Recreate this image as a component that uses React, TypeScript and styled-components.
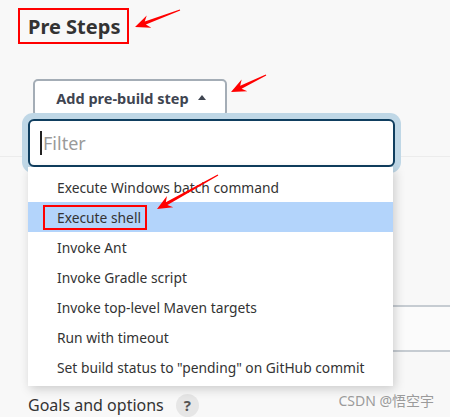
import styled, { createGlobalStyle } from 'styled-components'

const GlobalStyle = createGlobalStyle`
    html, body {
        margin: 0;
        padding: 0;
        background: #f8f8f8;
        font-family: "Noto Sans", "Open Sans", sans-serif;
        color: #333;
    }
`

const Page = styled('div')`
    position: relative;
    width: 450px;
    height: 417px;
    overflow: hidden;
    padding-top: 8px;
    box-sizing: border-box;
`

const Heading = styled('h2')`
    display: inline-block;
    margin: 0 0 0 18px;
    padding: 0 7px 0 8px;
    height: 36px;
    line-height: 33px;
    border: 2px solid #f00;
    box-sizing: border-box;
    font-size: 20px;
    font-weight: 700;
    color: #333;
`

const StepButton = styled('button')`
    display: flex;
    align-items: center;
    justify-content: center;
    gap: 9px;
    margin: 35px 0 0 33px;
    width: 194px;
    height: 38px;
    padding: 0 0 0 2px;
    background: #fff;
    border: 2px solid #a4adb6;
    border-radius: 5px;
    font-family: inherit;
    font-size: 14.5px;
    font-weight: 700;
    color: #3f4551;
`

const Caret = styled('span')`
    width: 0;
    height: 0;
    border-left: 4.5px solid transparent;
    border-right: 4.5px solid transparent;
    border-bottom: 5px solid #3f4551;
    margin-top: -2px;
`

const Divider = styled('div')`
    margin-top: 39px;
    height: 1px;
    background: #ececec;
`

const FieldInput = styled('div')`
    margin: 148px -10px 0 28px;
    height: 47px;
    background: #fbfbfb;
    border: 2px solid #c6ccd2;
    border-radius: 4px;
    box-sizing: border-box;
`

const FieldLabel = styled('div')`
    display: flex;
    align-items: center;
    gap: 12px;
    margin: 41px 0 0 28px;
    font-size: 16px;
    line-height: 24px;
    color: #333;
`

const HelpBadge = styled('span')`
    display: inline-flex;
    align-items: center;
    justify-content: center;
    width: 23px;
    height: 23px;
    border-radius: 50%;
    background: #e6e6e6;
    font-size: 15px;
    font-weight: 700;
    color: #555;
`

const Menu = styled('div')`
    position: absolute;
    left: 22px;
    top: 113px;
    width: 379px;
`

const FilterRing = styled('div')`
    padding: 6px;
    background: #bfd7e6;
    border-radius: 11px;
`

const FilterBox = styled('div')`
    display: flex;
    align-items: center;
    height: 48px;
    padding-left: 10px;
    background: #fff;
    border: 2px solid #0f3e5f;
    border-radius: 6px;
    box-sizing: border-box;
    font-size: 18px;
    color: #9a9a9a;
`

const TextCursor = styled('span')`
    width: 2px;
    height: 24px;
    background: #222;
    margin-right: 1px;
`

const MenuList = styled('ul')`
    list-style: none;
    margin: -6px 0 0 6px;
    padding: 5px 0 4px;
    width: 365px;
    background: #fff;
    box-shadow: 2px 3px 10px rgba(0, 0, 0, 0.18);
`

const MenuItem = styled('li')<{ $active?: boolean }>`
    display: flex;
    align-items: center;
    height: 30px;
    padding-left: 29px;
    font-size: 13.8px;
    color: #333;
    background: ${p => (p.$active ? '#b3d4fb' : 'transparent')};
`

const Marked = styled('span')`
    margin-left: -14px;
    padding: 1px 4px 1px 12px;
    border: 2px solid #f00;
`

const Watermark = styled('div')`
    position: absolute;
    right: 16px;
    bottom: 7px;
    font-size: 14px;
    color: #9b9b9b;
    font-family: "Noto Sans", "Noto Sans CJK SC", sans-serif;
`

const Annotations = styled('svg')`
    position: absolute;
    left: 0;
    top: 0;
    pointer-events: none;
`

const items = [
    'Execute Windows batch command',
    'Execute shell',
    'Invoke Ant',
    'Invoke Gradle script',
    'Invoke top-level Maven targets',
    'Run with timeout',
    'Set build status to "pending" on GitHub commit'
]

const arrows = [
    { from: [180, 10], to: [135, 27] },
    { from: [266, 75], to: [231, 92] },
    { from: [218, 175], to: [157, 209] }
]

function arrowPath(from: number[], to: number[]) {
    const dx = to[0] - from[0]
    const dy = to[1] - from[1]
    const len = Math.hypot(dx, dy)
    const ux = dx / len
    const uy = dy / len
    const nx = -uy
    const ny = ux
    const head = 15
    const wing = 6.5
    const bx = to[0] - ux * head
    const by = to[1] - uy * head
    const notchX = to[0] - ux * (head - 4)
    const notchY = to[1] - uy * (head - 4)
    const shaft = 1.6
    return [
        `M${from[0] + nx * 0.6},${from[1] + ny * 0.6}`,
        `L${notchX + nx * shaft},${notchY + ny * shaft}`,
        `L${bx + nx * wing},${by + ny * wing}`,
        `L${to[0]},${to[1]}`,
        `L${bx - nx * wing},${by - ny * wing}`,
        `L${notchX - nx * shaft},${notchY - ny * shaft}`,
        `L${from[0] - nx * 0.6},${from[1] - ny * 0.6}`,
        'Z'
    ].join(' ')
}

export default function App() {
    return (
        <Page>
            <GlobalStyle />
            <Heading>Pre Steps</Heading>
            <StepButton>
                Add pre-build step
                <Caret />
            </StepButton>
            <Divider />
            <FieldInput />
            <FieldLabel>
                Goals and options
                <HelpBadge>?</HelpBadge>
            </FieldLabel>

            <Menu>
                <FilterRing>
                    <FilterBox>
                        <TextCursor />
                        Filter
                    </FilterBox>
                </FilterRing>
                <MenuList>
                    {items.map(item => (
                        <MenuItem key={item} $active={item === 'Execute shell'}>
                            {item === 'Execute shell' ? <Marked>{item}</Marked> : item}
                        </MenuItem>
                    ))}
                </MenuList>
            </Menu>

            <Watermark>CSDN @悟空宇</Watermark>

            <Annotations width={450} height={417}>
                {arrows.map((a, i) => (
                    <path key={i} d={arrowPath(a.from, a.to)} fill="#f00" />
                ))}
            </Annotations>
        </Page>
    )
}
